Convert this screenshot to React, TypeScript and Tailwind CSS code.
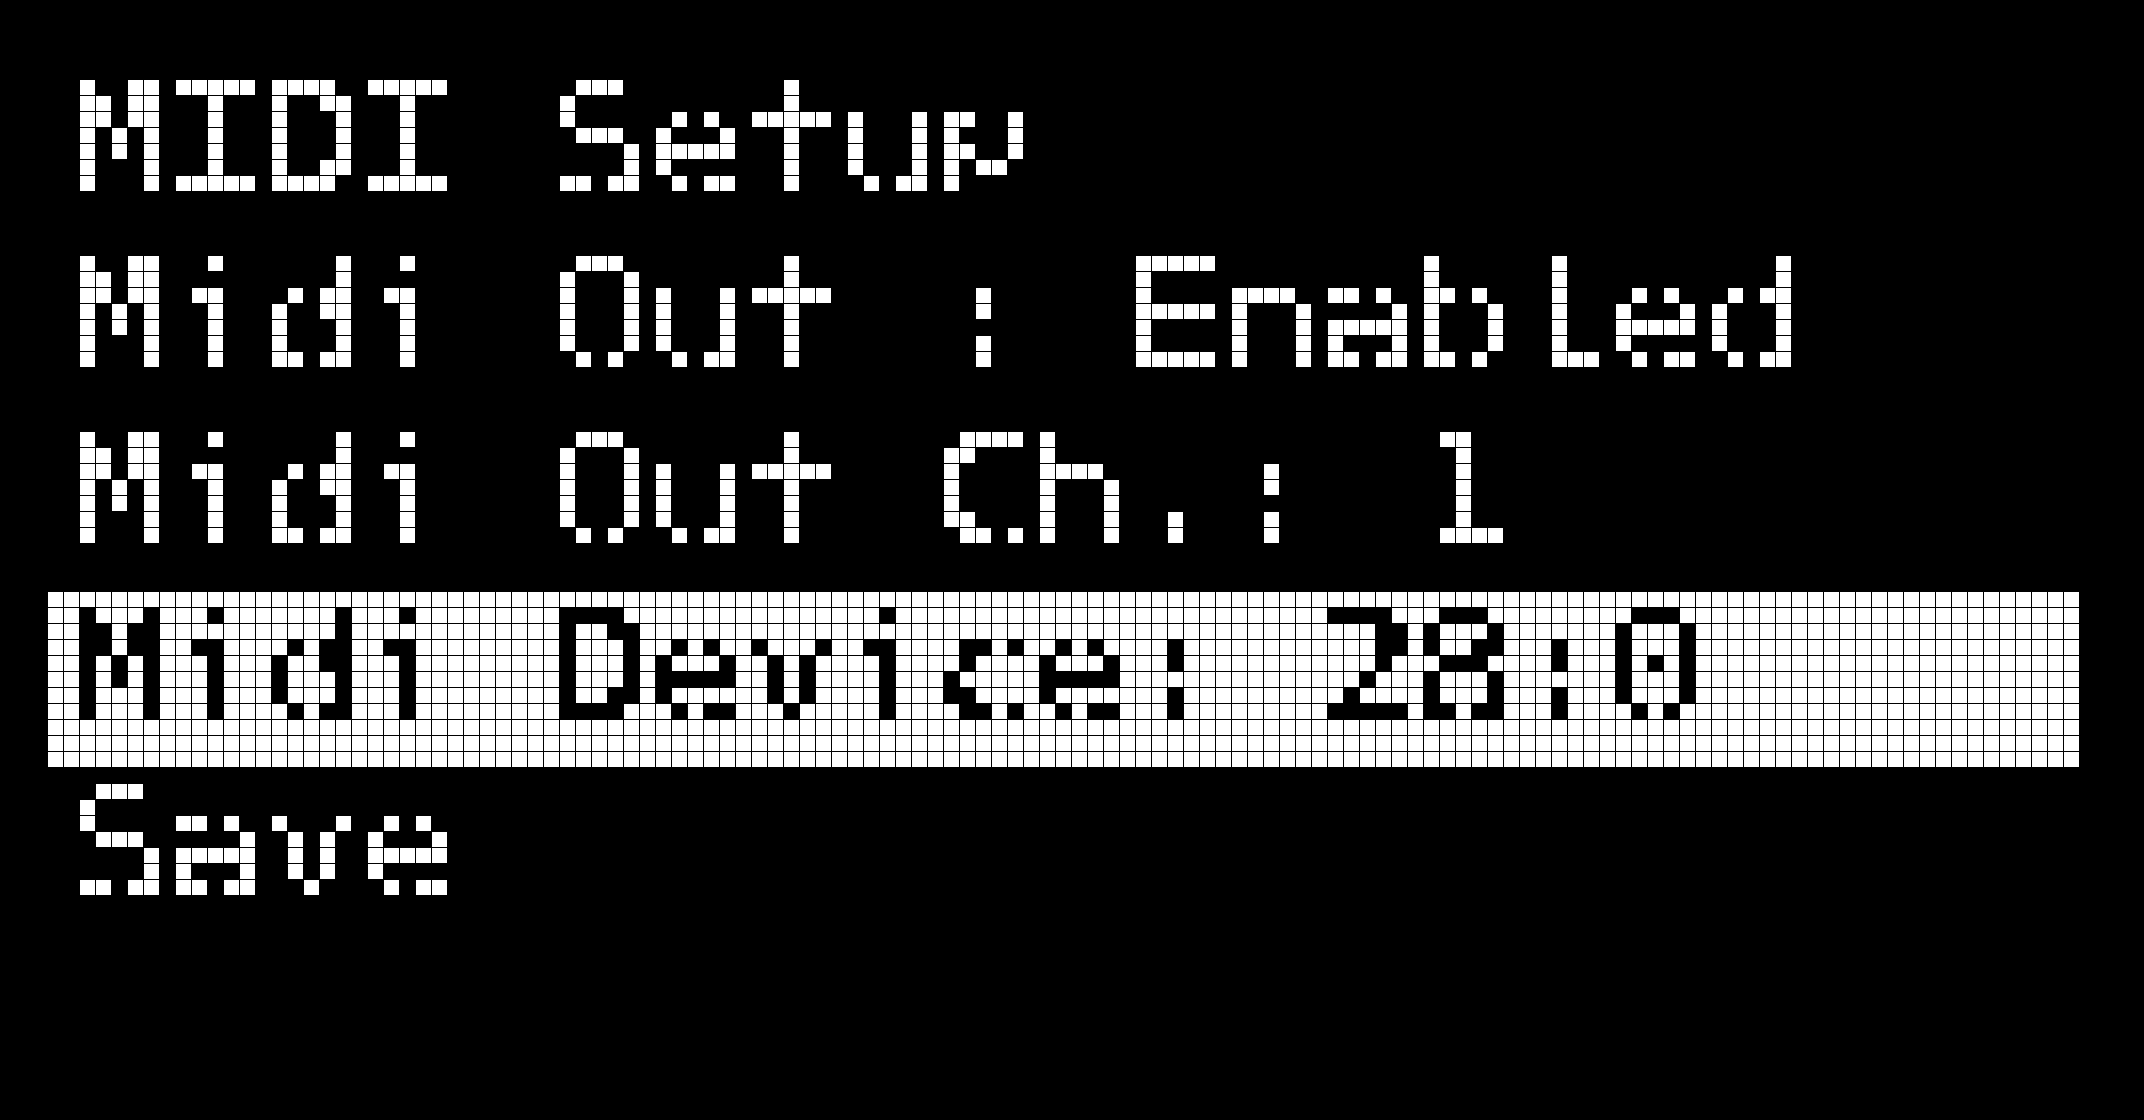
import React from "react";

type Line = { text: string; selected?: boolean };

const lines: Line[] = [
  { text: "MIDI Setup" },
  { text: "Midi Out : Enabled" },
  { text: "Midi Out Ch.: 1" },
  { text: "Midi Device: 28:0", selected: true },
  { text: "Save" },
];

// The screen is a grid of 16px dots: the filter samples the rendered text at
// the centre of every dot and grows each sample into a 15x15 block.
function DotFilter() {
  return (
    <svg width="0" height="0" className="absolute">
      <defs>
        <filter
          id="lcd"
          x="0"
          y="0"
          width="2144"
          height="1120"
          filterUnits="userSpaceOnUse"
          primitiveUnits="userSpaceOnUse"
          colorInterpolationFilters="sRGB"
        >
          <feFlood x="7" y="7" width="1" height="1" floodColor="#fff" result="dot" />
          <feComposite in="dot" in2="dot" operator="over" x="0" y="0" width="16" height="16" result="cell" />
          <feTile in="cell" result="grid" />
          <feComposite in="SourceGraphic" in2="grid" operator="in" result="samples" />
          <feComponentTransfer in="samples" result="sharp">
            <feFuncR type="discrete" tableValues="0 1" />
            <feFuncG type="discrete" tableValues="0 1" />
            <feFuncB type="discrete" tableValues="0 1" />
          </feComponentTransfer>
          <feMorphology in="sharp" operator="dilate" radius="7" />
        </filter>
      </defs>
    </svg>
  );
}

// 5x7 character cells: punctuation gets heavier dots, and "p" is squeezed
// so that it sits on the baseline like the LCD's own glyph.
function LcdText({ text }: { text: string }) {
  return (
    <>
      {text.split("").map((ch, i) => {
        if (ch === ":" || ch === ".") {
          return (
            <span key={i} className="font-bold">
              {ch}
            </span>
          );
        }
        if (ch === "p") {
          return (
            <span key={i} className="inline-block origin-top translate-y-[13px] scale-y-70">
              {ch}
            </span>
          );
        }
        return ch;
      })}
    </>
  );
}

export default function App() {
  return (
    <div className="w-[2144px] h-[1120px] bg-black overflow-hidden">
      <DotFilter />
      <div className="[filter:url(#lcd)] w-[2144px] h-[1120px] bg-black pt-[64px] font-['DejaVu_Sans_Mono',monospace] text-[160px] tracking-[-0.32px] [-webkit-text-stroke-width:1.5px]">
        {lines.map((line) =>
          line.selected ? (
            <div key={line.text} className="ml-[48px] w-[2032px] h-[176px] bg-white text-black">
              <div className="pl-[23px] leading-[154px] whitespace-pre">
                <LcdText text={line.text} />
              </div>
            </div>
          ) : (
            <div key={line.text} className="h-[176px] text-white">
              <div className="pl-[71px] leading-[154px] whitespace-pre">
                <LcdText text={line.text} />
              </div>
            </div>
          )
        )}
      </div>
    </div>
  );
}
